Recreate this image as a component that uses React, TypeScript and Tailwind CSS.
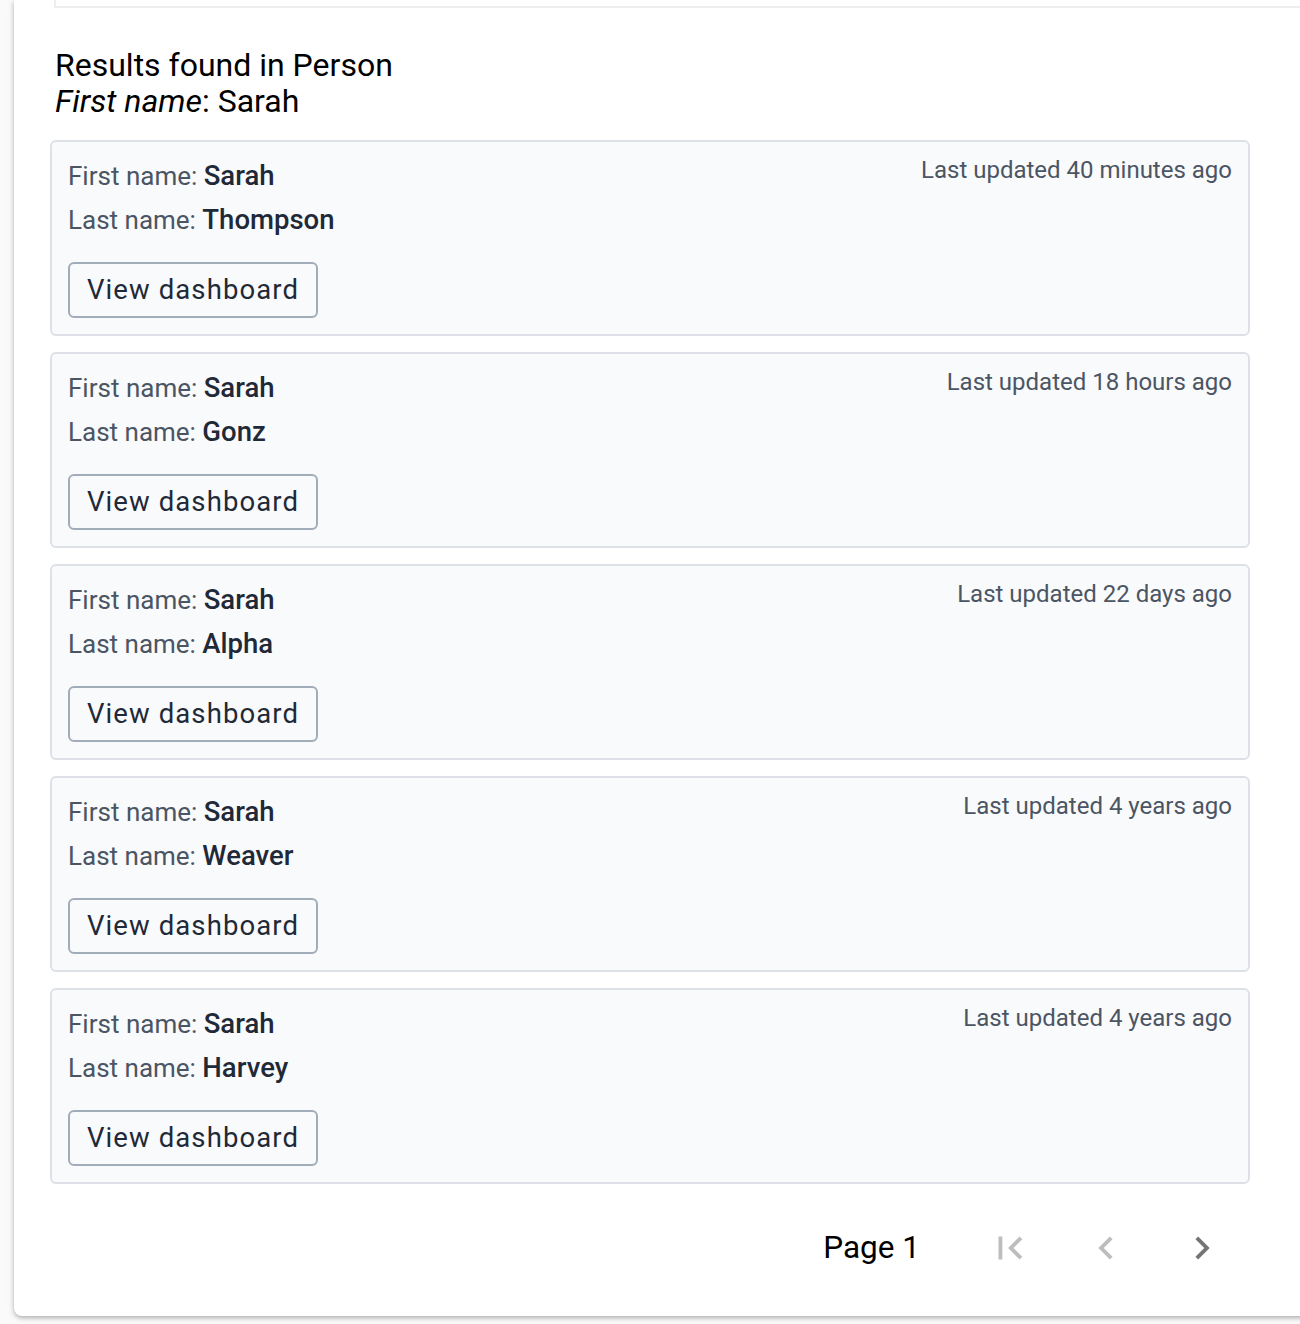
import React from 'react';

type Person = {
  firstName: string;
  lastName: string;
  updated: string;
};

const people: Person[] = [
  { firstName: 'Sarah', lastName: 'Thompson', updated: '40 minutes ago' },
  { firstName: 'Sarah', lastName: 'Gonz', updated: '18 hours ago' },
  { firstName: 'Sarah', lastName: 'Alpha', updated: '22 days ago' },
  { firstName: 'Sarah', lastName: 'Weaver', updated: '4 years ago' },
  { firstName: 'Sarah', lastName: 'Harvey', updated: '4 years ago' },
];

const FirstPageIcon = ({ className }: { className?: string }) => (
  <svg viewBox="0 0 24 24" className={className} fill="currentColor">
    <path d="M18.41 16.59L13.82 12l4.59-4.59L17 6l-6 6 6 6zM6 6h2v12H6z" />
  </svg>
);

const PrevIcon = ({ className }: { className?: string }) => (
  <svg viewBox="0 0 24 24" className={className} fill="currentColor">
    <path d="M15.41 7.41L14 6l-6 6 6 6 1.41-1.41L10.83 12z" />
  </svg>
);

const NextIcon = ({ className }: { className?: string }) => (
  <svg viewBox="0 0 24 24" className={className} fill="currentColor">
    <path d="M10 6L8.59 7.41 13.17 12l-4.59 4.59L10 18l6-6z" />
  </svg>
);

const ResultCard: React.FC<{ person: Person }> = ({ person }) => (
  <div className="rounded-[6px] border-2 border-[#dde1e7] bg-[#f9fafb] px-[16px] pt-[12px] pb-[16px]">
    <div className="flex items-start justify-between">
      <div className="text-[26px] leading-[44px] text-[#4b5563]">
        <div>
          First name: <span className="text-[27.5px] font-medium text-[#1f2937]">{person.firstName}</span>
        </div>
        <div>
          Last name: <span className="text-[27.5px] font-medium text-[#1f2937]">{person.lastName}</span>
        </div>
      </div>
      <div className="pt-[1px] text-[24px] leading-[30px] text-[#4b5563]">
        Last updated {person.updated}
      </div>
    </div>
    <button className="mt-[20px] flex h-[56px] w-[250px] items-center justify-center rounded-[6px] border-2 border-[#a3acb9] bg-[#f9fafb] text-[27.5px] tracking-[0.04em] text-[#1f2937]">
      View dashboard
    </button>
  </div>
);

export default function App() {
  return (
    <div
      className="h-[1324px] overflow-hidden bg-[#fafafa]"
      style={{ fontFamily: 'Roboto, "Liberation Sans", sans-serif' }}
    >
      <div className="ml-[14px] h-[1316px] w-[1320px] rounded-bl-[8px] bg-white shadow-[0_2px_4px_rgba(0,0,0,0.25),0_1px_10px_rgba(0,0,0,0.08)]">
        {/* search form, scrolled off */}
        <div className="ml-[40px] h-[8px] border-b-2 border-l-2 border-[#eeeeee]" />

        <div className="pl-[36px] pr-[64px]">
          <div className="mt-[39px] pl-[5px] text-[32px] leading-[36px] text-black">
            <div>Results found in Person</div>
            <div>
              <span className="italic">First name</span>: Sarah
            </div>
          </div>

          <div className="mt-[21px] flex w-[1200px] flex-col gap-[16px]">
            {people.map((p, i) => (
              <ResultCard key={i} person={p} />
            ))}
          </div>

          {/* Pagination */}
          <div className="mt-[41px] flex w-[1200px] items-center justify-end">
            <span className="mr-[42px] text-[31.5px] leading-[40px] text-black">Page 1</span>
            <button className="flex w-[96px] items-center justify-center text-[#bdbdbd]">
              <FirstPageIcon className="h-[46px] w-[46px]" />
            </button>
            <button className="flex w-[96px] items-center justify-center text-[#bdbdbd]">
              <PrevIcon className="h-[46px] w-[46px]" />
            </button>
            <button className="flex w-[96px] items-center justify-center text-[#757575]">
              <NextIcon className="h-[46px] w-[46px]" />
            </button>
          </div>
        </div>
      </div>
    </div>
  );
}
